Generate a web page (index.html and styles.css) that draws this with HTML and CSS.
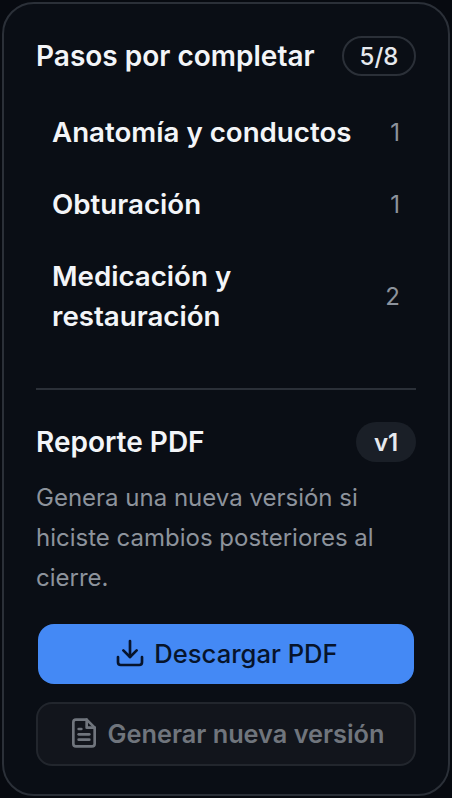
FILE: index.html
```html
<!DOCTYPE html>
<html lang="es">
<head>
<meta charset="utf-8">
<title>Pasos por completar</title>
<link rel="stylesheet" href="styles.css">
</head>
<body>
<aside class="card">
  <div class="head">
    <h2 class="title">Pasos por completar</h2>
    <span class="pill pill-outline">5/8</span>
  </div>
  <ul class="steps">
    <li class="step"><span class="step-name">Anatomía y conductos</span><span class="step-count">1</span></li>
    <li class="step"><span class="step-name">Obturación</span><span class="step-count">1</span></li>
    <li class="step"><span class="step-name">Medicación y restauración</span><span class="step-count">2</span></li>
  </ul>
  <hr class="divider">
  <div class="head">
    <h2 class="title">Reporte PDF</h2>
    <span class="pill pill-solid">v1</span>
  </div>
  <p class="desc">Genera una nueva versión si hiciste cambios posteriores al cierre.</p>
  <div class="actions">
    <button class="btn btn-primary" type="button">
      <svg class="icon" viewBox="0 0 24 24" fill="none" stroke="currentColor" stroke-width="2" stroke-linecap="round" stroke-linejoin="round"><path d="M21 15v4a2 2 0 0 1-2 2H5a2 2 0 0 1-2-2v-4"/><path d="M7 10l5 5 5-5"/><path d="M12 15V3"/></svg>
      <span>Descargar PDF</span>
    </button>
    <button class="btn btn-disabled" type="button">
      <svg class="icon" viewBox="0 0 24 24" fill="none" stroke="currentColor" stroke-width="2" stroke-linecap="round" stroke-linejoin="round"><path d="M14 2H6a2 2 0 0 0-2 2v16a2 2 0 0 0 2 2h12a2 2 0 0 0 2-2V8z"/><path d="M14 2v6h6"/><path d="M16 13H8"/><path d="M16 17H8"/><path d="M10 9H8"/></svg>
      <span>Generar nueva versión</span>
    </button>
  </div>
</aside>
</body>
</html>
```
FILE: styles.css
```css
* { box-sizing: border-box; }
html, body { margin: 0; padding: 0; height: 100%; }
body {
  background: #070a10;
  font-family: Inter, "Liberation Sans", sans-serif;
  padding: 2px;
}
.card {
  height: 794px;
  border: 2px solid #2b3038;
  border-radius: 32px;
  background: #0a0e15;
  padding: 32px 32px 0;
  display: flex;
  flex-direction: column;
}
.head {
  display: flex;
  align-items: center;
  justify-content: space-between;
  height: 40px;
}
.title {
  margin: 0;
  font-size: 28px;
  line-height: 40px;
  font-weight: 600;
  color: #f3f5f8;
}
.pill {
  height: 40px;
  border-radius: 20px;
  display: flex;
  align-items: center;
  justify-content: center;
  font-size: 24px;
  font-weight: 500;
  color: #e6e9ee;
}
.pill-outline { width: 74px; border: 2px solid #2b3038; }
.pill-solid { width: 60px; background: #1a1f27; font-weight: 600; }
.steps { list-style: none; margin: 20px 0 0; padding: 0; }
.step {
  display: flex;
  align-items: center;
  justify-content: space-between;
  gap: 24px;
  padding: 16px 16px;
}
.step-name {
  font-size: 27.7px;
  line-height: 40px;
  font-weight: 600;
  color: #f3f5f8;
}
.step-count { font-size: 24px; color: #8d939c; }
.divider {
  width: 100%;
  margin: 36px 0 32px;
  border: 0;
  border-top: 2px solid #2b3038;
}
.desc {
  margin: 16px 0 0;
  font-size: 24px;
  line-height: 40px;
  color: #8d939c;
}
.actions { display: flex; flex-direction: column; margin-top: 26px; gap: 18px; }
.btn {
  display: flex;
  align-items: center;
  justify-content: center;
  gap: 8px;
  font-family: inherit;
  font-size: 25.3px;
  border-radius: 16px;
  padding: 0 0 2px;
}
.icon { width: 32px; height: 32px; flex: none; }
.btn-primary {
  height: 60px;
  margin: 0 2px;
  border: 0;
  background: #4489f5;
  color: #07142b;
  font-size: 25.6px;
  font-weight: 500;
}
.btn-disabled {
  height: 64px;
  border: 2px solid #22262d;
  background: #12151c;
  color: #70757d;
  font-weight: 600;
}
```
